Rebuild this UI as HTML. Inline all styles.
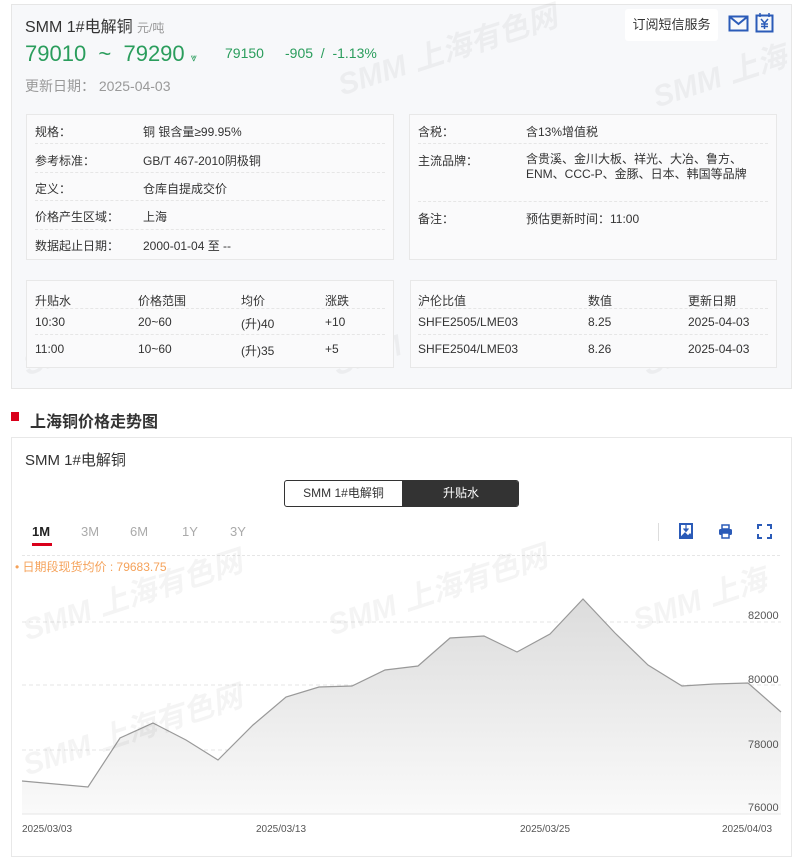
<!DOCTYPE html>
<html><head><meta charset="utf-8"><style>
*{margin:0;padding:0;box-sizing:border-box}
body{width:800px;height:849px;background:#fff;font-family:"Liberation Sans","Noto Sans CJK SC",sans-serif;color:#333;position:relative;overflow:hidden;font-size:12px}
.a{position:absolute;white-space:nowrap}
.panel{position:absolute;left:11px;top:4px;width:781px;height:385px;background:#f7f8fa;border:1px solid #e6e6e6}
.box{position:absolute;background:#fafafb;border:1px solid #e8e8e8}
.dl{position:absolute;left:8px;right:8px;border-top:1px dashed #e6e6e6}
.g{color:#2a9d5c}
.wm{position:absolute;white-space:nowrap;font-size:30px;font-weight:bold;font-style:italic;color:rgba(0,0,0,0.045);transform:rotate(-18deg);transform-origin:left bottom}
</style></head><body>
<div class="panel"></div>
<div class="wm" style="left:345px;top:60px">SMM 上海有色网</div>
<div class="wm" style="left:660px;top:72px">SMM 上海</div>
<div class="wm" style="left:30px;top:340px">SMM 上</div>
<div class="wm" style="left:340px;top:340px">SMM 上</div>
<div class="wm" style="left:650px;top:340px">SMM 上</div>
<div class="a" style="left:25px;top:13px;font-size:16px;color:#333">SMM 1#电解铜 <span style="font-size:12px;color:#999">元/吨</span></div>
<div class="a g" style="left:25px;top:41px;font-size:22px">79010 &nbsp;~&nbsp; 79290 <span style="font-size:11px">⩔</span></div>
<div class="a g" style="left:225px;top:45px;font-size:14px">79150</div>
<div class="a g" style="left:285px;top:45px;font-size:14px">-905 &nbsp;/ &nbsp;-1.13%</div>
<div class="a" style="left:25px;top:76px;font-size:14px;color:#999">更新日期： 2025-04-03</div>
<div class="a" style="left:625px;top:9px;width:93px;height:32px;background:#fff;border-radius:3px;font-size:13px;line-height:32px;text-align:center;color:#333">订阅短信服务</div>
<svg class="a" style="left:728px;top:14px" width="22" height="20" viewBox="0 0 22 20"><rect x="1.5" y="2.5" width="18" height="14" fill="none" stroke="#2b5bb8" stroke-width="2"/><path d="M2 3l8.5 7 8.5-7" fill="none" stroke="#2b5bb8" stroke-width="2"/></svg>
<svg class="a" style="left:755px;top:12px" width="20" height="22" viewBox="0 0 20 22"><rect x="1.5" y="3.5" width="16" height="16" fill="none" stroke="#2b5bb8" stroke-width="2"/><path d="M5 1v4M14 1v4M6 7l3.5 4 3.5-4M9.5 11v6M6 12h7M6 14.5h7" fill="none" stroke="#2b5bb8" stroke-width="1.5"/></svg>

<div class="box" style="left:26px;top:114px;width:368px;height:146px"></div>
<div class="box" style="left:409px;top:114px;width:368px;height:146px"></div>
<div class="a" style="left:35px;top:123px">规格：</div><div class="a" style="left:143px;top:123px">铜 银含量≥99.95%</div>
<div class="dl" style="left:35px;width:350px;top:143px"></div>
<div class="a" style="left:35px;top:152px">参考标准：</div><div class="a" style="left:143px;top:152px">GB/T 467-2010阴极铜</div>
<div class="dl" style="left:35px;width:350px;top:172px"></div>
<div class="a" style="left:35px;top:180px">定义：</div><div class="a" style="left:143px;top:180px">仓库自提成交价</div>
<div class="dl" style="left:35px;width:350px;top:200px"></div>
<div class="a" style="left:35px;top:208px">价格产生区域：</div><div class="a" style="left:143px;top:208px">上海</div>
<div class="dl" style="left:35px;width:350px;top:229px"></div>
<div class="a" style="left:35px;top:237px">数据起止日期：</div><div class="a" style="left:143px;top:237px">2000-01-04 至 --</div>

<div class="a" style="left:418px;top:123px">含税：</div><div class="a" style="left:526px;top:123px">含13%增值税</div>
<div class="dl" style="left:418px;width:350px;top:143px"></div>
<div class="a" style="left:418px;top:152px">主流品牌：</div><div class="a" style="left:526px;top:152px;line-height:15px">含贵溪、金川大板、祥光、大冶、鲁方、<br>ENM、CCC-P、金豚、日本、韩国等品牌</div>
<div class="dl" style="left:418px;width:350px;top:201px"></div>
<div class="a" style="left:418px;top:210px">备注：</div><div class="a" style="left:526px;top:210px">预估更新时间：11:00</div>

<div class="box" style="left:26px;top:280px;width:368px;height:88px"></div>
<div class="box" style="left:410px;top:280px;width:367px;height:88px"></div>
<div class="a" style="left:35px;top:292px">升贴水</div><div class="a" style="left:138px;top:292px">价格范围</div><div class="a" style="left:241px;top:292px">均价</div><div class="a" style="left:325px;top:292px">涨跌</div>
<div class="dl" style="left:35px;width:350px;top:308px"></div>
<div class="a" style="left:35px;top:315px">10:30</div><div class="a" style="left:138px;top:315px">20~60</div><div class="a" style="left:241px;top:315px">(升)40</div><div class="a" style="left:325px;top:315px">+10</div>
<div class="dl" style="left:35px;width:350px;top:334px"></div>
<div class="a" style="left:35px;top:342px">11:00</div><div class="a" style="left:138px;top:342px">10~60</div><div class="a" style="left:241px;top:342px">(升)35</div><div class="a" style="left:325px;top:342px">+5</div>
<div class="a" style="left:418px;top:292px">沪伦比值</div><div class="a" style="left:588px;top:292px">数值</div><div class="a" style="left:688px;top:292px">更新日期</div>
<div class="dl" style="left:418px;width:350px;top:308px"></div>
<div class="a" style="left:418px;top:315px">SHFE2505/LME03</div><div class="a" style="left:588px;top:315px">8.25</div><div class="a" style="left:688px;top:315px">2025-04-03</div>
<div class="dl" style="left:418px;width:350px;top:334px"></div>
<div class="a" style="left:418px;top:342px">SHFE2504/LME03</div><div class="a" style="left:588px;top:342px">8.26</div><div class="a" style="left:688px;top:342px">2025-04-03</div>

<div class="a" style="left:11px;top:412px;width:8px;height:9px;background:#d9001b"></div>
<div class="a" style="left:30px;top:408px;font-size:16px;font-weight:bold;color:#333">上海铜价格走势图</div>

<div class="a" style="left:11px;top:437px;width:781px;height:420px;border:1px solid #e8e8e8;background:#fff"></div>
<div class="a" style="left:25px;top:449px;font-size:15px;color:#333">SMM 1#电解铜</div>
<div class="a" style="left:284px;top:480px;width:235px;height:27px;border:1px solid #333;border-radius:3px;overflow:hidden">
<div class="a" style="left:0;top:0;width:117px;height:25px;line-height:25px;text-align:center;font-size:12px">SMM 1#电解铜</div>
<div class="a" style="left:117px;top:0;width:118px;height:25px;line-height:25px;text-align:center;font-size:12px;background:#333;color:#fff">升贴水</div></div>
<div class="a" style="left:32px;top:524px;font-size:13px;font-weight:bold;color:#222">1M</div>
<div class="a" style="left:32px;top:543px;width:20px;height:3px;background:#d9001b"></div>
<div class="a" style="left:81px;top:524px;font-size:13px;color:#aaa">3M</div>
<div class="a" style="left:130px;top:524px;font-size:13px;color:#aaa">6M</div>
<div class="a" style="left:182px;top:524px;font-size:13px;color:#aaa">1Y</div>
<div class="a" style="left:230px;top:524px;font-size:13px;color:#aaa">3Y</div>
<div class="a" style="left:658px;top:523px;width:1px;height:18px;background:#ddd"></div>
<svg class="a" style="left:679px;top:523px" width="14" height="16" viewBox="0 0 14 16"><rect x="1" y="1" width="12" height="14" fill="none" stroke="#2b5bb8" stroke-width="2"/><path d="M7 2v6M4.5 5.5L7 8.5 9.5 5.5M2 14l4-4 3 3 2-2 2 3z" fill="#2b5bb8" stroke="#2b5bb8" stroke-width="1.2"/></svg>
<svg class="a" style="left:718px;top:524px" width="15" height="15" viewBox="0 0 15 15"><rect x="4" y="1" width="7" height="4" fill="none" stroke="#2b5bb8" stroke-width="1.5"/><rect x="1" y="5" width="13" height="6" rx="1.5" fill="#2b5bb8"/><rect x="4" y="9" width="7" height="5" fill="#fff" stroke="#2b5bb8" stroke-width="1.5"/></svg>
<svg class="a" style="left:757px;top:524px" width="15" height="15" viewBox="0 0 15 15"><path d="M1 5V1h4M10 1h4v4M14 10v4h-4M5 14H1v-4" fill="none" stroke="#2b5bb8" stroke-width="2"/></svg>
<div class="a" style="left:22px;top:555px;width:758px;border-top:1px dashed #e6e6e6"></div>
<div class="a" style="left:15px;top:558px;font-size:12px;color:#f5a25a">• 日期段现货均价 : 79683.75</div>

<svg class="a" style="left:0;top:580px" width="800" height="269" viewBox="0 580 800 269">
<defs><linearGradient id="gr" x1="0" y1="0" x2="0" y2="1"><stop offset="0" stop-color="#dcdcdc"/><stop offset="1" stop-color="#fafafa"/></linearGradient></defs>
<g stroke="#e6e6e6" stroke-dasharray="4 3"><line x1="22" y1="622" x2="781" y2="622"/><line x1="22" y1="685" x2="781" y2="685"/><line x1="22" y1="750" x2="781" y2="750"/></g>
<path d="M22,781 L88,787 L120,738 L153,723 L186,740 L218,760 L253,725 L286,697 L319,687 L352,686 L385,670 L418,666 L450,638 L484,636 L517,652 L550,634 L583,599 L615,633 L648,665 L682,686 L714,684 L748,683 L781,712 L781,814 L22,814Z" fill="url(#gr)"/>
<path d="M22,781 L88,787 L120,738 L153,723 L186,740 L218,760 L253,725 L286,697 L319,687 L352,686 L385,670 L418,666 L450,638 L484,636 L517,652 L550,634 L583,599 L615,633 L648,665 L682,686 L714,684 L748,683 L781,712" fill="none" stroke="#999" stroke-width="1.2"/>
<line x1="22" y1="814" x2="781" y2="814" stroke="#e6e6e6"/>
<g font-family="Liberation Sans,sans-serif" font-size="11" fill="#555"><text x="748" y="619">82000</text><text x="748" y="683">80000</text><text x="748" y="748">78000</text><text x="748" y="811">76000</text>
<text x="22" y="832" font-size="10">2025/03/03</text><text x="256" y="832" font-size="10">2025/03/13</text><text x="520" y="832" font-size="10">2025/03/25</text><text x="722" y="832" font-size="10">2025/04/03</text></g>
</svg>
<div class="wm" style="left:30px;top:605px">SMM 上海有色网</div>
<div class="wm" style="left:335px;top:600px">SMM 上海有色网</div>
<div class="wm" style="left:640px;top:595px">SMM 上海</div>
<div class="wm" style="left:30px;top:740px">SMM 上海有色网</div>
</body></html>
